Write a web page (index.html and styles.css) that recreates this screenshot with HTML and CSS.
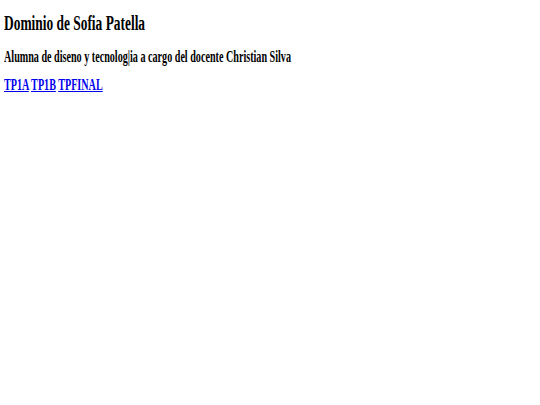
FILE: index.html
```html
<!DOCTYPE html>
<html lang="es">
<head>
<meta charset="utf-8">
<title>Dominio de Sofia Patella</title>
<link rel="stylesheet" href="styles.css">
</head>
<body>
<main class="page">
  <h2 class="title"><span class="squish">Dominio de Sofia Patella</span></h2>
  <h4 class="subtitle"><span class="squish narrow">Alumna de diseno y tecnolog|ia a cargo del docente Christian Silva</span></h4>
  <h4 class="links"><span class="squish narrow"><a href="#">TP1A</a> <a href="#">TP1B</a> <a href="#">TPFINAL</a></span></h4>
</main>
</body>
</html>
```
FILE: styles.css
```css
html, body {
  margin: 0;
  padding: 0;
  background: #ffffff;
}
.page {
  display: flex;
  flex-direction: column;
  padding: 13px 0 0 4px;
  font-family: "Liberation Serif", "Times New Roman", serif;
  font-weight: bold;
  color: #000000;
}
.title, .subtitle, .links {
  margin: 0;
  white-space: nowrap;
}
.title {
  font-size: 20px;
  line-height: 20px;
}
.subtitle {
  margin-top: 16px;
  font-size: 16px;
  line-height: 16px;
}
.links {
  margin-top: 12px;
  font-size: 16px;
  line-height: 16px;
}
.squish {
  display: inline-block;
  transform: scaleX(0.67);
  transform-origin: left center;
}
.squish.narrow {
  transform: scaleX(0.633);
}
.links a {
  color: #0000ee;
  text-decoration: underline;
}
```
